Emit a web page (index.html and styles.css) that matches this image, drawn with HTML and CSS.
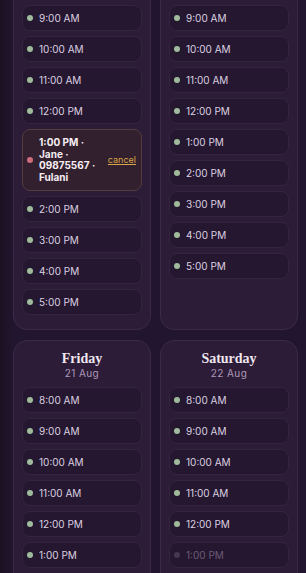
FILE: index.html
```html
<!DOCTYPE html>
<html lang="en">
<head>
<meta charset="utf-8">
<title>Week schedule</title>
<link rel="stylesheet" href="styles.css">
</head>
<body>
<main class="week">
  <section class="day">
    <header class="day-head"><h2 class="day-name">Wednesday</h2><div class="day-date">19 Aug</div></header>
    <ul class="slots">
      <li class="slot"><span class="dot"></span><span class="time">8:00 AM</span></li>
      <li class="slot"><span class="dot"></span><span class="time">9:00 AM</span></li>
      <li class="slot"><span class="dot"></span><span class="time">10:00 AM</span></li>
      <li class="slot"><span class="dot"></span><span class="time">11:00 AM</span></li>
      <li class="slot"><span class="dot"></span><span class="time">12:00 PM</span></li>
      <li class="slot booked"><span class="dot"></span><span class="time">1:00 PM · Jane · 09875567 · Fulani</span><a class="cancel" href="#">cancel</a></li>
      <li class="slot"><span class="dot"></span><span class="time">2:00 PM</span></li>
      <li class="slot"><span class="dot"></span><span class="time">3:00 PM</span></li>
      <li class="slot"><span class="dot"></span><span class="time">4:00 PM</span></li>
      <li class="slot"><span class="dot"></span><span class="time">5:00 PM</span></li>
    </ul>
  </section>
  <section class="day">
    <header class="day-head"><h2 class="day-name">Thursday</h2><div class="day-date">20 Aug</div></header>
    <ul class="slots">
      <li class="slot"><span class="dot"></span><span class="time">8:00 AM</span></li>
      <li class="slot"><span class="dot"></span><span class="time">9:00 AM</span></li>
      <li class="slot"><span class="dot"></span><span class="time">10:00 AM</span></li>
      <li class="slot"><span class="dot"></span><span class="time">11:00 AM</span></li>
      <li class="slot"><span class="dot"></span><span class="time">12:00 PM</span></li>
      <li class="slot"><span class="dot"></span><span class="time">1:00 PM</span></li>
      <li class="slot"><span class="dot"></span><span class="time">2:00 PM</span></li>
      <li class="slot"><span class="dot"></span><span class="time">3:00 PM</span></li>
      <li class="slot"><span class="dot"></span><span class="time">4:00 PM</span></li>
      <li class="slot"><span class="dot"></span><span class="time">5:00 PM</span></li>
    </ul>
  </section>
  <section class="day">
    <header class="day-head"><h2 class="day-name">Friday</h2><div class="day-date">21 Aug</div></header>
    <ul class="slots">
      <li class="slot"><span class="dot"></span><span class="time">8:00 AM</span></li>
      <li class="slot"><span class="dot"></span><span class="time">9:00 AM</span></li>
      <li class="slot"><span class="dot"></span><span class="time">10:00 AM</span></li>
      <li class="slot"><span class="dot"></span><span class="time">11:00 AM</span></li>
      <li class="slot"><span class="dot"></span><span class="time">12:00 PM</span></li>
      <li class="slot"><span class="dot"></span><span class="time">1:00 PM</span></li>
      <li class="slot"><span class="dot"></span><span class="time">2:00 PM</span></li>
    </ul>
  </section>
  <section class="day">
    <header class="day-head"><h2 class="day-name">Saturday</h2><div class="day-date">22 Aug</div></header>
    <ul class="slots">
      <li class="slot"><span class="dot"></span><span class="time">8:00 AM</span></li>
      <li class="slot"><span class="dot"></span><span class="time">9:00 AM</span></li>
      <li class="slot"><span class="dot"></span><span class="time">10:00 AM</span></li>
      <li class="slot"><span class="dot"></span><span class="time">11:00 AM</span></li>
      <li class="slot"><span class="dot"></span><span class="time">12:00 PM</span></li>
      <li class="slot past"><span class="dot"></span><span class="time">1:00 PM</span></li>
      <li class="slot past"><span class="dot"></span><span class="time">2:00 PM</span></li>
    </ul>
  </section>
</main>
</body>
</html>
```
FILE: styles.css
```css
html, body {
  margin: 0;
  padding: 0;
}
body {
  background: linear-gradient(90deg, #1c1122 0px, #221530 14px, #221530 100%);
  font-family: "Inter", "Liberation Sans", sans-serif;
  color: #ddd0e1;
  overflow: hidden;
  height: 573px;
}
.week {
  display: grid;
  grid-template-columns: 138px 138px;
  column-gap: 9px;
  row-gap: 10px;
  padding-left: 13px;
  margin-top: -73px;
}
.day {
  background: #2c1c38;
  border: 1px solid #3a2947;
  border-radius: 14px;
  padding: 10px 8px 14px;
}
.day-head {
  text-align: center;
  margin-bottom: 8px;
}
.day-name {
  margin: 0;
  font-family: "Liberation Serif", serif;
  font-weight: bold;
  font-size: 14px;
  line-height: 16px;
  color: #f1e7ef;
}
.day-date {
  font-size: 10px;
  line-height: 12px;
  letter-spacing: 0.4px;
  color: #ad97b6;
}
.slots {
  list-style: none;
  margin: 0;
  padding: 0;
  display: flex;
  flex-direction: column;
  gap: 5px;
}
.slot {
  display: flex;
  align-items: center;
  height: 26px;
  box-sizing: border-box;
  padding: 0 5px 0 4px;
  background: #24172f;
  border: 1px solid #34243f;
  border-radius: 8px;
  font-size: 10px;
  gap: 6px;
}
.dot {
  flex: none;
  width: 6px;
  height: 6px;
  border-radius: 50%;
  background: #9fbb9c;
}
.time {
  flex: 1;
  min-width: 0;
}
.slot.booked {
  height: auto;
  padding-top: 7px;
  padding-bottom: 7px;
  background: #33202e;
  border-color: #553a3e;
  color: #f6eef3;
  font-weight: bold;
  line-height: 11.5px;
}
.slot.booked .dot {
  background: #cf6b7f;
}
.cancel {
  flex: none;
  color: #d8a548;
  font-size: 9px;
  font-weight: normal;
  text-decoration: underline;
}
.slot.past {
  color: #6c5a77;
}
.slot.past .dot {
  background: #46364f;
}
```
